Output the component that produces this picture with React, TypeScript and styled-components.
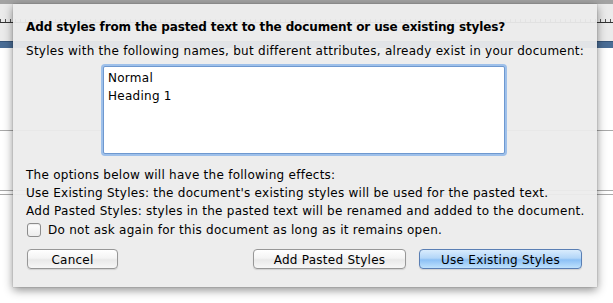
import styled, { createGlobalStyle } from "styled-components";

const GlobalStyle = createGlobalStyle`
  html, body {
    margin: 0;
    padding: 0;
    background: #ffffff;
  }
  body {
    font-family: "DejaVu Sans", "Noto Sans", sans-serif;
  }
`;

const Window = styled.div`
  position: relative;
  width: 613px;
  height: 303px;
  overflow: hidden;
  display: flex;
  flex-direction: column;
`;

const TopStrip = styled.div`
  height: 4px;
  background: #a3a3a3;
`;

const Ruler = styled.div`
  height: 37px;
  background: #ebebeb;
  display: flex;
  flex-direction: column;
  justify-content: flex-start;
  padding-top: 15px;
  box-sizing: border-box;
`;

const RulerTicks = styled.div`
  height: 3px;
  background-image: repeating-linear-gradient(
    to right,
    #555 0px,
    #555 1px,
    transparent 1px,
    transparent 5px
  );
  border-bottom: 1px solid #333;
`;

const BlueBar = styled.div`
  height: 6px;
  background: #4a6d96;
  border-top: 1px solid #37557a;
`;

const Doc = styled.div`
  flex: 1;
  background: #ffffff;
  padding-top: 82px;
`;

const DocLine = styled.div<{ $double?: boolean }>`
  height: ${(p) => (p.$double ? "3px" : "1px")};
  border-top: 1px solid #a9a9a9;
  border-bottom: ${(p) => (p.$double ? "1px solid #a9a9a9" : "none")};
  margin-bottom: ${(p) => (p.$double ? "0" : "58px")};
`;

const Sheet = styled.div`
  position: absolute;
  left: 13px;
  top: 4px;
  width: 584px;
  height: 283px;
  box-sizing: border-box;
  background: rgba(236, 236, 236, 0.94);
  box-shadow: 0 3px 9px rgba(0, 0, 0, 0.45), 0 0 1px rgba(0, 0, 0, 0.35);
  padding: 15px 15px 18px 13px;
  display: flex;
  flex-direction: column;
  font-size: 12px;
  letter-spacing: 0.26px;
  color: #000;
`;

const Title = styled.div`
  font-weight: bold;
  letter-spacing: -0.12px;
  line-height: 16px;
  white-space: nowrap;
`;

const Info = styled.div`
  line-height: 16px;
  margin-top: 8px;
  white-space: nowrap;
`;

const ListBox = styled.div`
  margin: 7px 0 0 77px;
  width: 402px;
  height: 88px;
  box-sizing: border-box;
  background: #fff;
  border: 1px solid #6e98cf;
  box-shadow: 0 0 0 2px #9ec0ea;
  border-radius: 2px;
  padding: 2px 4px;
`;

const ListItem = styled.div`
  line-height: 18px;
  white-space: nowrap;
`;

const Effects = styled.div`
  margin-top: 12px;
  display: flex;
  flex-direction: column;
`;

const EffectLine = styled.div`
  line-height: 18px;
  white-space: nowrap;
`;

const CheckRow = styled.label`
  margin-top: 1px;
  height: 18px;
  display: flex;
  align-items: center;
  gap: 7px;
  padding-left: 1px;
  white-space: nowrap;
`;

const CheckBox = styled.span`
  width: 12px;
  height: 12px;
  border: 1px solid #8c8c8c;
  border-radius: 3px;
  background: linear-gradient(#ffffff, #ececec);
  box-shadow: inset 0 1px 1px rgba(0, 0, 0, 0.08);
`;

const ButtonRow = styled.div`
  margin-top: 10px;
  display: flex;
  align-items: center;
  padding-left: 1px;
`;

const Spacer = styled.div`
  flex: 1;
`;

const Button = styled.button<{ $w: number; $primary?: boolean }>`
  width: ${(p) => p.$w}px;
  height: 20px;
  margin: 0;
  padding: 1px 0 0;
  box-sizing: border-box;
  font-family: "DejaVu Sans", "Noto Sans", sans-serif;
  font-size: 12px;
  letter-spacing: 0.26px;
  color: #000;
  border-radius: 4px;
  border: 1px solid ${(p) => (p.$primary ? "#5a7fb4" : "#979797")};
  background: ${(p) =>
    p.$primary
      ? "linear-gradient(#d9ecfd 0%, #b3d6f8 45%, #8cc0f5 55%, #bfe2fd 100%)"
      : "linear-gradient(#ffffff 0%, #f4f4f4 45%, #e9e9e9 55%, #f7f7f7 100%)"};
  box-shadow: 0 1px 1px rgba(0, 0, 0, 0.12);
  & + & {
    margin-left: 13px;
  }
`;

export default function App() {
  return (
    <>
      <GlobalStyle />
      <Window>
        <TopStrip />
        <Ruler>
          <RulerTicks />
        </Ruler>
        <BlueBar />
        <Doc>
          <DocLine />
          <DocLine $double />
        </Doc>
        <Sheet>
          <Title>Add styles from the pasted text to the document or use existing styles?</Title>
          <Info>Styles with the following names, but different attributes, already exist in your document:</Info>
          <ListBox>
            <ListItem>Normal</ListItem>
            <ListItem>Heading 1</ListItem>
          </ListBox>
          <Effects>
            <EffectLine>The options below will have the following effects:</EffectLine>
            <EffectLine>Use Existing Styles: the document's existing styles will be used for the pasted text.</EffectLine>
            <EffectLine>Add Pasted Styles: styles in the pasted text will be renamed and added to the document.</EffectLine>
          </Effects>
          <CheckRow>
            <CheckBox />
            Do not ask again for this document as long as it remains open.
          </CheckRow>
          <ButtonRow>
            <Button $w={91}>Cancel</Button>
            <Spacer />
            <Button $w={153}>Add Pasted Styles</Button>
            <Button $w={163} $primary>
              Use Existing Styles
            </Button>
          </ButtonRow>
        </Sheet>
      </Window>
    </>
  );
}
